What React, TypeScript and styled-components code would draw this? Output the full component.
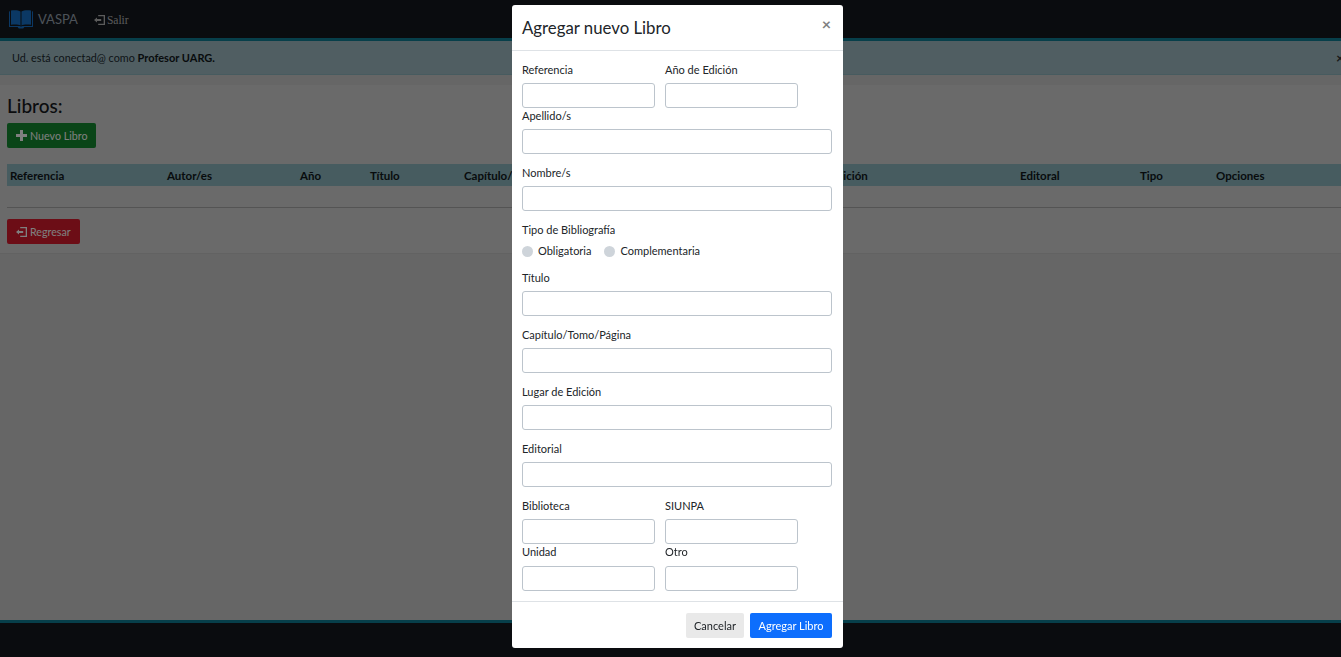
import React from 'react'
import styled, { createGlobalStyle } from 'styled-components'

const UI_FONT = `Lato, "Noto Sans", "Open Sans", sans-serif`

const GlobalStyle = createGlobalStyle`
  html, body {
    margin: 0;
    padding: 0;
    height: 100%;
    overflow: hidden;
    background: #cdcdcd;
    font-family: ${UI_FONT};
    font-size: 11px;
    color: #212529;
  }
  * {
    box-sizing: border-box;
  }
`

const columns = [
  { title: 'Referencia', width: 157 },
  { title: 'Autor/es', width: 133 },
  { title: 'Año', width: 70 },
  { title: 'Título', width: 94 },
  { title: 'Capítulo/Tomo/Página', width: 320 },
  { title: 'Lugar de Edición', width: 236 },
  { title: 'Editoral', width: 120 },
  { title: 'Tipo', width: 76 },
  { title: 'Opciones', width: 130 },
]

const ExitIcon = () => (
  <svg width="11" height="10" viewBox="0 0 11 10" fill="currentColor">
    <path d="M0 5l3-2.6v1.7h4.2v1.8H3v1.7z" />
    <path d="M4.2 0H11v10H4.2V8.8h5.5V1.2H4.2z" />
  </svg>
)

const PlusIcon = () => (
  <svg width="11" height="11" viewBox="0 0 11 11" fill="currentColor">
    <path d="M4 0h3v4h4v3H7v4H4V7H0V4h4z" />
  </svg>
)

const BookLogo = () => (
  <svg width="24" height="19" viewBox="0 0 24 19" fill="#1670c8">
    <path d="M0 1.6L1 1.3V16h9.5c.8 0 1.2.4 1.5.8.3-.4.7-.8 1.5-.8H23V1.3l1 .3V17h-8.6l-1.2 1.4H9.8L8.6 17H0z" />
    <path d="M2 .6C5.5 0 9.5.2 11.5 1.6v13.8C9.5 14.4 5.5 14.4 2 14.8zM22 .6c-3.5-.6-7.5-.4-9.5 1v13.8c2-1 6-1 9.5-.6z" />
  </svg>
)

const FieldGroup = ({ label, half }: { label: string; half?: boolean }) => (
  <Field $half={half}>
    <FieldLabel>{label}</FieldLabel>
    <TextInput type="text" />
  </Field>
)

const App: React.FC = () => {
  return (
    <>
      <GlobalStyle />
      <Page>
        <Navbar>
          <BookLogo />
          <Brand>VASPA</Brand>
          <NavLink>
            <ExitIcon />
            Salir
          </NavLink>
        </Navbar>
        <Alert>
          <span>
            Ud. está conectad@ como <strong>Profesor UARG.</strong>
          </span>
          <AlertClose>×</AlertClose>
        </Alert>
        <Panel>
          <Heading>Libros:</Heading>
          <ActionButton $color="#148a30">
            <PlusIcon />
            Nuevo Libro
          </ActionButton>
          <TableHead>
            {columns.map((col) => (
              <HeadCell key={col.title} $width={col.width}>
                {col.title}
              </HeadCell>
            ))}
          </TableHead>
          <Divider />
          <ActionButton $color="#d81a2c">
            <ExitIcon />
            Regresar
          </ActionButton>
        </Panel>
        <Footer />
      </Page>

      <Backdrop />
      <ModalLayer>
        <Modal>
          <ModalHeader>
            <ModalTitle>Agregar nuevo Libro</ModalTitle>
            <CloseButton>×</CloseButton>
          </ModalHeader>
          <ModalBody>
            <TwoCols>
              <FieldGroup half label="Referencia" />
              <FieldGroup half label="Año de Edición" />
            </TwoCols>
            <Stack>
              <FieldGroup label="Apellido/s" />
              <FieldGroup label="Nombre/s" />
              <RadioGroup>
                <FieldLabel>Tipo de Bibliografía</FieldLabel>
                <RadioRow>
                  <RadioOption>
                    <RadioDot />
                    Obligatoria
                  </RadioOption>
                  <RadioOption>
                    <RadioDot />
                    Complementaria
                  </RadioOption>
                </RadioRow>
              </RadioGroup>
              <FieldGroup label="Título" />
              <FieldGroup label="Capítulo/Tomo/Página" />
              <FieldGroup label="Lugar de Edición" />
              <FieldGroup label="Editorial" />
            </Stack>
            <TwoCols>
              <FieldGroup half label="Biblioteca" />
              <FieldGroup half label="SIUNPA" />
            </TwoCols>
            <LastRow>
              <FieldGroup half label="Unidad" />
              <FieldGroup half label="Otro" />
            </LastRow>
          </ModalBody>
          <ModalFooter>
            <FooterButton $bg="#e9e9e9" $fg="#212529" $width={58}>
              Cancelar
            </FooterButton>
            <FooterButton $bg="#0d6efd" $fg="#ffffff" $width={82}>
              Agregar Libro
            </FooterButton>
          </ModalFooter>
        </Modal>
      </ModalLayer>
    </>
  )
}

const Page = styled.div`
  display: flex;
  flex-direction: column;
  height: 657px;
  overflow: hidden;
`

const Navbar = styled.nav`
  display: flex;
  align-items: center;
  height: 41px;
  flex: none;
  padding-left: 9px;
  background: #14181f;
  border-bottom: 3px solid #0e7f95;
`

const Brand = styled.span`
  margin-left: 5px;
  font-size: 13px;
  color: #9aa5b1;
`

const NavLink = styled.a`
  display: flex;
  align-items: center;
  gap: 2px;
  margin: 1px 0 0 16px;
  font-family: 'Liberation Serif', serif;
  font-size: 11.5px;
  color: #b8b8b8;
`

const Alert = styled.div`
  display: flex;
  align-items: center;
  justify-content: space-between;
  flex: none;
  height: 34px;
  padding-left: 12px;
  background: #a0bcc4;
  border-bottom: 1px solid #8fb6bf;
  color: #1b2a30;
  font-size: 10.8px;

  strong {
    font-size: 11px;
    font-weight: 700;
    color: #10171a;
  }
`

const AlertClose = styled.span`
  margin-right: -3px;
  font-size: 14px;
  font-weight: 700;
  color: #333;
`

const Panel = styled.main`
  flex: none;
  height: 169px;
  margin-top: 10px;
  padding: 9px 0 0 7px;
  background: #d4d4d4;
  border-bottom: 1px solid #c4c4c4;
`

const Heading = styled.h2`
  margin: 0 0 6px;
  font-size: 19px;
  line-height: 23px;
  font-weight: 500;
  color: #16191c;
`

const ActionButton = styled.a<{ $color: string }>`
  display: inline-flex;
  align-items: center;
  gap: 3px;
  height: 25px;
  padding: 0 9px;
  border-radius: 2px;
  background: ${(p) => p.$color};
  color: #ffffff;
  font-size: 10.7px;
  vertical-align: top;
`

const TableHead = styled.div`
  display: flex;
  align-items: center;
  height: 22px;
  margin-top: 16px;
  width: 1340px;
  background: #8fb8c0;
`

const HeadCell = styled.div<{ $width: number }>`
  flex: none;
  width: ${(p) => p.$width}px;
  padding: 1px 0 0 3px;
  font-size: 11.5px;
  font-weight: 700;
  color: #10171a;
  white-space: nowrap;
`

const Divider = styled.hr`
  width: 1340px;
  height: 1px;
  margin: 21px 0 11px;
  border: 0;
  background: #a9a9a9;
`

const Footer = styled.footer`
  flex: none;
  height: 37px;
  margin-top: auto;
  background: #14181f;
  border-top: 3px solid #0e7f95;
`

const Backdrop = styled.div`
  position: fixed;
  inset: 0;
  background: rgba(0, 0, 0, 0.5);
`

const ModalLayer = styled.div`
  position: fixed;
  inset: 0;
  display: flex;
  justify-content: center;
  align-items: flex-start;
  padding: 5px 0 0 14px;
`

const Modal = styled.div`
  width: 331px;
  height: 643px;
  display: flex;
  flex-direction: column;
  background: #ffffff;
  border-radius: 3px;
`

const ModalHeader = styled.div`
  display: flex;
  justify-content: space-between;
  flex: none;
  height: 46px;
  padding: 11px 12px 0 10px;
  border-bottom: 1px solid #dee2e6;
`

const ModalTitle = styled.h5`
  margin: 0;
  font-size: 16.8px;
  line-height: 24px;
  font-weight: 400;
  color: #212529;
`

const CloseButton = styled.span`
  font-size: 16px;
  line-height: 16px;
  font-weight: 700;
  color: #808080;
`

const ModalBody = styled.div`
  flex: 1;
  padding: 11px 11px 0 10px;
`

const TwoCols = styled.div`
  display: flex;
  gap: 10px;
`

const Stack = styled.div`
  display: flex;
  flex-direction: column;
  gap: 11px;
  margin-bottom: 11px;
`

const Field = styled.div<{ $half?: boolean }>`
  width: ${(p) => (p.$half ? '133px' : '100%')};
`

const FieldLabel = styled.label`
  display: block;
  height: 18px;
  margin-bottom: 3px;
  line-height: 16px;
  color: #212529;
`

const LastRow = styled(TwoCols)`
  ${FieldLabel} {
    margin-bottom: 4px;
  }
`

const TextInput = styled.input`
  display: block;
  width: 100%;
  height: 25px;
  padding: 0 6px;
  background: #ffffff;
  border: 1px solid #bcc4cc;
  border-radius: 3px;
`

const RadioGroup = styled.div`
  display: flex;
  flex-direction: column;
`

const RadioRow = styled.div`
  display: flex;
  gap: 13px;
`

const RadioOption = styled.span`
  display: flex;
  align-items: center;
  gap: 5px;
  line-height: 16px;
`

const RadioDot = styled.span`
  width: 11px;
  height: 11px;
  border-radius: 50%;
  background: #ced4da;
`

const ModalFooter = styled.div`
  display: flex;
  justify-content: flex-end;
  align-items: center;
  gap: 6px;
  flex: none;
  height: 47px;
  padding-right: 11px;
  border-top: 1px solid #dee2e6;
`

const FooterButton = styled.button<{ $bg: string; $fg: string; $width: number }>`
  width: ${(p) => p.$width}px;
  height: 25px;
  padding: 0;
  border: 0;
  border-radius: 2px;
  background: ${(p) => p.$bg};
  color: ${(p) => p.$fg};
  font-family: ${UI_FONT};
  font-size: 11px;
`

export default App
